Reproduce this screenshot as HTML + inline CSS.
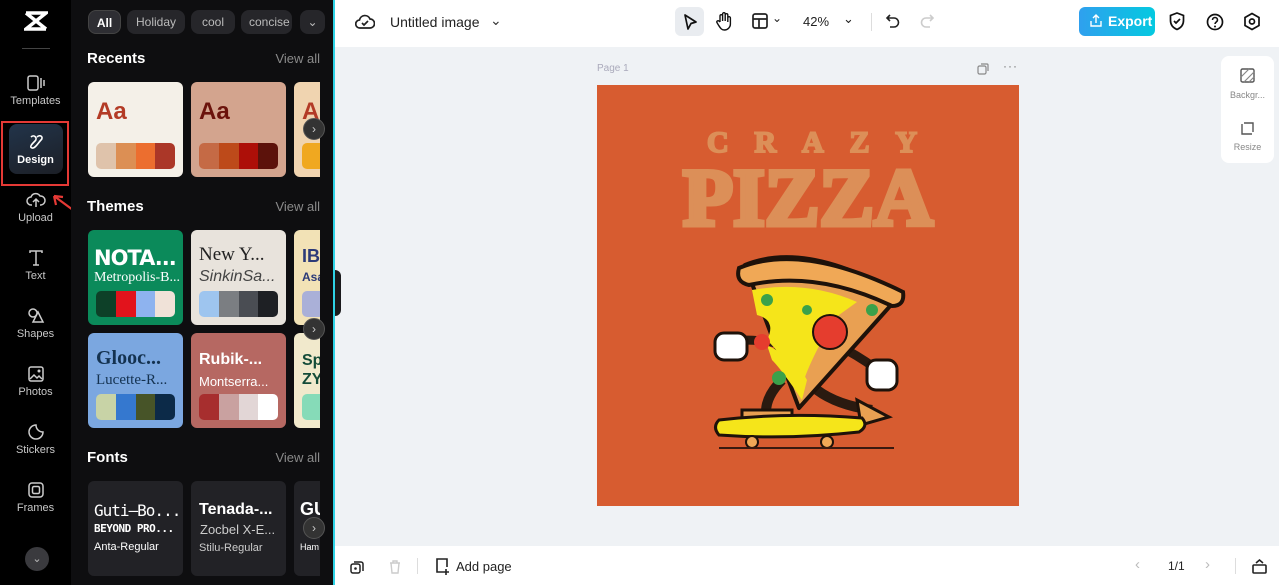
<!DOCTYPE html>
<html><head><meta charset="utf-8"><style>
*{box-sizing:border-box;margin:0;padding:0}
body{width:1279px;height:585px;overflow:hidden;font-family:"Liberation Sans",sans-serif;background:#eff2f5;position:relative}
.abs{position:absolute}
#rail{left:0;top:0;width:71px;height:585px;background:#000}
#panel{left:71px;top:0;width:262px;height:585px;background:#0e0e10;overflow:hidden}
#clip{position:absolute;left:0;top:0;width:249px;height:585px;overflow:hidden}
#edge{left:333px;top:0;width:2px;height:585px;background:#2fd3e6}
.ri{position:absolute;left:0;width:71px;text-align:center;color:#c8c8c8;font-size:11px}
.ri svg{display:block;margin:0 auto 3px}
.chip{position:absolute;top:10px;height:24px;border-radius:8px;background:#26262a;color:#bbb;font-size:12px;line-height:24px;text-align:center;white-space:nowrap}
.h{position:absolute;left:16px;color:#fff;font-weight:bold;font-size:15px}
.va{position:absolute;right:13px;color:#8a8a8a;font-size:13px}
.card{position:absolute;width:95px;height:95px;border-radius:6px;overflow:hidden;white-space:nowrap}
.pal{position:absolute;left:8px;right:8px;bottom:8px;height:26px;border-radius:5px;overflow:hidden;display:flex}
.pal i{flex:1}
.arrow{position:absolute;width:22px;height:22px;border-radius:50%;background:#333;border:1px solid #555;color:#ccc;font-size:12px;line-height:20px;text-align:center}
#top{left:335px;top:0;width:944px;height:47px;background:#fff}
#bot{left:335px;top:546px;width:944px;height:39px;background:#fff}
</style></head><body>
<div id="rail" class="abs">
 <svg class="abs" style="left:24px;top:10px" width="24" height="22" viewBox="0 0 24 22"><path d="M2 3h20L2 19h20M2 3l20 16" stroke="#fff" stroke-width="3.5" fill="none"/></svg>
 <div class="abs" style="left:22px;top:48px;width:28px;height:1px;background:#444"></div>
 <div class="ri" style="top:74px"><svg width="20" height="18" viewBox="0 0 20 18"><rect x="2" y="2" width="10" height="14" rx="2" fill="none" stroke="#ccc" stroke-width="1.5"/><path d="M15 4v10M18 6v6" stroke="#ccc" stroke-width="1.5"/></svg>Templates</div>
 <div class="abs" style="left:1px;top:121px;width:68px;height:65px;border:2px solid #e53935"></div>
 <div class="abs" style="left:9px;top:124px;width:54px;height:50px;border-radius:8px;background:linear-gradient(160deg,#22344a,#1c1f26)"></div>
 <div class="ri" style="top:133px;color:#fff;font-weight:bold"><svg width="18" height="18" viewBox="0 0 18 18"><path d="M4 4c3-3 7 1 4 4S2 14 5 15s6-5 9-8-1-6-4-3" stroke="#fff" stroke-width="1.6" fill="none"/></svg>Design</div>
 <svg class="abs" style="left:48px;top:192px" width="46" height="34"><path d="M44 32L6 4M6 4l2 9M6 4l9 1" stroke="#e53935" stroke-width="2.2" fill="none"/></svg>
 <div class="ri" style="top:191px"><svg width="20" height="18" viewBox="0 0 20 18"><path d="M6 14H5a4 4 0 010-8 5 5 0 019-1 4 4 0 011 9h-1M10 16V9M7 11l3-3 3 3" stroke="#ccc" stroke-width="1.5" fill="none"/></svg>Upload</div>
 <div class="ri" style="top:249px"><svg width="18" height="18" viewBox="0 0 18 18"><path d="M3 4V2h12v2M9 2v14M6 16h6" stroke="#ccc" stroke-width="1.5" fill="none"/></svg>Text</div>
 <div class="ri" style="top:307px"><svg width="20" height="18" viewBox="0 0 20 18"><circle cx="7" cy="6" r="4" fill="none" stroke="#ccc" stroke-width="1.5"/><path d="M12 5l5 10H7z" fill="none" stroke="#ccc" stroke-width="1.5"/></svg>Shapes</div>
 <div class="ri" style="top:365px"><svg width="18" height="18" viewBox="0 0 18 18"><rect x="2" y="2" width="14" height="14" rx="2" fill="none" stroke="#ccc" stroke-width="1.5"/><path d="M3 14l4-4 3 3 2-2 3 3" stroke="#ccc" stroke-width="1.5" fill="none"/><circle cx="12" cy="6" r="1.5" fill="#ccc"/></svg>Photos</div>
 <div class="ri" style="top:423px"><svg width="18" height="18" viewBox="0 0 18 18"><path d="M16 9a7 7 0 11-7-7c0 4 3 7 7 7z" fill="none" stroke="#ccc" stroke-width="1.5"/></svg>Stickers</div>
 <div class="ri" style="top:481px"><svg width="18" height="18" viewBox="0 0 18 18"><rect x="2" y="2" width="14" height="14" rx="3" fill="none" stroke="#ccc" stroke-width="1.5"/><rect x="5.5" y="5.5" width="7" height="7" rx="1.5" fill="none" stroke="#ccc" stroke-width="1.5"/></svg>Frames</div>
 <div class="abs" style="left:25px;top:547px;width:24px;height:24px;border-radius:50%;background:#3a3a3e;color:#bbb;text-align:center;font-size:11px;line-height:24px">⌄</div>
</div>
<div id="panel" class="abs">
 <div class="chip" style="left:17px;width:33px;background:#2e2e33;border:1px solid #444;color:#fff;font-weight:bold">All</div>
 <div class="chip" style="left:56px;width:58px">Holiday</div>
 <div class="chip" style="left:120px;width:44px">cool</div>
 <div class="chip" style="left:170px;width:51px;overflow:hidden;text-align:left;padding-left:8px">concise</div>
 <div class="chip" style="left:229px;width:25px">⌄</div>
 <div class="h" style="top:50px">Recents</div><div class="va" style="top:51px">View all</div>
 <div class="h" style="top:198px">Themes</div><div class="va" style="top:199px">View all</div>
 <div class="h" style="top:449px">Fonts</div><div class="va" style="top:450px">View all</div>
 <div id="clip">
 <div class="card" style="left:17px;top:82px;background:#f4f0e8"><div class="abs" style="left:8px;top:16px;color:#b33b26;font-weight:bold;font-size:24px">Aa</div><div class="pal"><i style="background:#dfc3ab"></i><i style="background:#dc8f54"></i><i style="background:#ec6e2f"></i><i style="background:#ab3728"></i></div></div>
 <div class="card" style="left:120px;top:82px;background:#d3a48e"><div class="abs" style="left:8px;top:16px;color:#6b130c;font-weight:bold;font-size:24px">Aa</div><div class="pal"><i style="background:#c56a45"></i><i style="background:#bd4a1a"></i><i style="background:#ad0f08"></i><i style="background:#5c120b"></i></div></div>
 <div class="card" style="left:223px;top:82px;background:#f0d4b0"><div class="abs" style="left:8px;top:16px;color:#b33b26;font-weight:bold;font-size:24px">A</div><div class="pal"><i style="background:#f0a820"></i></div></div>
 <div class="card" style="left:17px;top:230px;background:#0b8a5a"><div class="abs" style="left:6px;top:16px;color:#fff;font-weight:900;font-size:21px;font-family:'DejaVu Sans';letter-spacing:-1px">NOTA...</div><div class="abs" style="left:6px;top:40px;color:#fff;font-family:'Liberation Serif';font-size:14px">Metropolis-B...</div><div class="pal"><i style="background:#0d4028"></i><i style="background:#e2131c"></i><i style="background:#8eb3ef"></i><i style="background:#f0e2d8"></i></div></div>
 <div class="card" style="left:120px;top:230px;background:#e8e3dc"><div class="abs" style="left:8px;top:14px;color:#222;font-family:'Liberation Serif';font-size:19px">New Y...</div><div class="abs" style="left:8px;top:38px;color:#444;font-style:italic;font-size:16px">SinkinSa...</div><div class="pal"><i style="background:#9ec5ef"></i><i style="background:#7b7e82"></i><i style="background:#4a4d53"></i><i style="background:#1e2024"></i></div></div>
 <div class="card" style="left:223px;top:230px;background:#f2e2b6"><div class="abs" style="left:8px;top:16px;color:#2c3a78;font-weight:bold;font-size:18px">IB</div><div class="abs" style="left:8px;top:40px;color:#2c3a78;font-weight:bold;font-size:12px">Asa</div><div class="pal"><i style="background:#aab0d8"></i></div></div>
 <div class="card" style="left:17px;top:333px;background:#7ba7e0"><div class="abs" style="left:8px;top:14px;color:#143250;font-family:'Liberation Serif';font-weight:bold;font-size:20px">Glooc...</div><div class="abs" style="left:8px;top:39px;color:#143250;font-family:'Liberation Serif';font-size:15px">Lucette-R...</div><div class="pal"><i style="background:#c8d3a6"></i><i style="background:#3578cf"></i><i style="background:#475428"></i><i style="background:#0c2a48"></i></div></div>
 <div class="card" style="left:120px;top:333px;background:#b66862"><div class="abs" style="left:8px;top:18px;color:#fff;font-weight:bold;font-size:16px">Rubik-...</div><div class="abs" style="left:8px;top:41px;color:#fff;font-size:13px">Montserra...</div><div class="pal"><i style="background:#a72e2e"></i><i style="background:#c9a1a0"></i><i style="background:#e2d6d6"></i><i style="background:#fff"></i></div></div>
 <div class="card" style="left:223px;top:333px;background:#f1e9cc"><div class="abs" style="left:8px;top:18px;color:#134b38;font-weight:bold;font-size:16px;line-height:19px">Sp<br>ZY</div><div class="pal"><i style="background:#86dbb8"></i></div></div>
 <div class="card" style="left:17px;top:481px;background:#222226;color:#fff"><div class="abs" style="left:6px;top:20px;font-size:16px;font-family:'DejaVu Sans Mono';letter-spacing:-1px">Guti–Bo...</div><div class="abs" style="left:6px;top:41px;font-size:11px;font-family:'DejaVu Sans Mono';font-weight:bold;letter-spacing:-0.5px">BEYOND PRO...</div><div class="abs" style="left:6px;top:60px;font-size:11px">Anta-Regular</div></div>
 <div class="card" style="left:120px;top:481px;background:#222226;color:#fff"><div class="abs" style="left:8px;top:20px;font-size:16px;font-weight:bold">Tenada-...</div><div class="abs" style="left:9px;top:41px;font-size:13px;color:#ccc">Zocbel X-E...</div><div class="abs" style="left:8px;top:61px;font-size:11px;color:#ccc">Stilu-Regular</div></div>
 <div class="card" style="left:223px;top:481px;background:#222226;color:#fff"><div class="abs" style="left:6px;top:18px;font-size:18px;font-weight:bold">GU</div><div class="abs" style="left:6px;top:61px;font-size:9px">Ham</div></div>
 </div>
 <div class="arrow" style="left:232px;top:118px">›</div>
 <div class="arrow" style="left:232px;top:318px">›</div>
 <div class="arrow" style="left:232px;top:517px">›</div>
</div>
<div class="abs" style="left:333px;top:270px;width:8px;height:46px;background:#1a1a1c;border-radius:0 6px 6px 0"></div>
<div id="edge" class="abs"></div>
<div id="top" class="abs">
 <svg class="abs" style="left:20px;top:13px" width="20" height="18" viewBox="0 0 20 18"><path d="M5 15a4 4 0 01-.5-8 5.5 5.5 0 0110.5-1 4.5 4.5 0 010 9z" fill="none" stroke="#222" stroke-width="1.7"/><path d="M7 10l2 2 4-4" fill="none" stroke="#222" stroke-width="1.7"/></svg>
 <div class="abs" style="left:55px;top:14px;font-size:14px;color:#222">Untitled image</div>
 <div class="abs" style="left:155px;top:12px;font-size:14px;color:#333">⌄</div>
 <div class="abs" style="left:340px;top:7px;width:29px;height:29px;border-radius:6px;background:#e9ecf0"></div>
 <svg class="abs" style="left:347px;top:13px" width="16" height="18"><path d="M3 2l11 7-5 1.5L6 16z" fill="none" stroke="#111" stroke-width="1.7" stroke-linejoin="round"/></svg>
 <svg class="abs" style="left:380px;top:11px" width="18" height="20"><path d="M5 11V5a1.3 1.3 0 012.6 0v5V3a1.3 1.3 0 012.6 0v7V4a1.3 1.3 0 012.6 0v7V7a1.3 1.3 0 012.6 0v6a6 6 0 01-6 6c-3 0-4-2-6-5l-1.5-2.5a1.3 1.3 0 012-1.5L5 11" fill="none" stroke="#111" stroke-width="1.4"/></svg>
 <svg class="abs" style="left:417px;top:13px" width="16" height="16"><rect x="1" y="1" width="14" height="14" rx="2" fill="none" stroke="#222" stroke-width="1.7"/><path d="M1 6h14M7 6v9" stroke="#222" stroke-width="1.7"/></svg>
 <div class="abs" style="left:437px;top:11px;font-size:12px;color:#222">⌄</div>
 <div class="abs" style="left:468px;top:14px;font-size:13px;color:#222">42%</div>
 <div class="abs" style="left:508px;top:11px;font-size:13px;color:#222">⌄</div>
 <div class="abs" style="left:536px;top:13px;width:1px;height:18px;background:#ddd"></div>
 <svg class="abs" style="left:550px;top:13px" width="16" height="16"><path d="M5 2L2 5l3 3M2 5h7a4.5 4.5 0 010 9H5" fill="none" stroke="#222" stroke-width="1.6"/></svg>
 <svg class="abs" style="left:584px;top:13px" width="16" height="16"><path d="M11 2l3 3-3 3M14 5H7a4.5 4.5 0 000 9h4" fill="none" stroke="#ccc" stroke-width="1.6"/></svg>
 <div class="abs" style="left:744px;top:7px;width:76px;height:29px;border-radius:6px;background:linear-gradient(90deg,#2fa0ee,#04c9e0);color:#fff;font-weight:bold;font-size:14px;line-height:29px;padding-left:29px">Export</div>
 <svg class="abs" style="left:755px;top:14px" width="12" height="13"><path d="M6 9V1M3 4l3-3 3 3M1 7v5h10V7" fill="none" stroke="#fff" stroke-width="1.4"/></svg>
 <svg class="abs" style="left:834px;top:12px" width="16" height="19"><path d="M8 1l6.5 2.5v5c0 4.5-3 7.5-6.5 9-3.5-1.5-6.5-4.5-6.5-9v-5z" fill="none" stroke="#111" stroke-width="1.7"/><path d="M5 9l2 2 4-4" fill="none" stroke="#111" stroke-width="1.7"/></svg>
 <svg class="abs" style="left:871px;top:13px" width="18" height="18"><circle cx="9" cy="9" r="7.5" fill="none" stroke="#111" stroke-width="1.7"/><path d="M6.5 7a2.5 2.5 0 015 0c0 2-2.5 2-2.5 4" fill="none" stroke="#111" stroke-width="1.6"/><circle cx="9" cy="13.5" r="1" fill="#111"/></svg>
 <svg class="abs" style="left:908px;top:12px" width="18" height="19"><path d="M9 1.5l7 4v8l-7 4-7-4v-8z" fill="none" stroke="#111" stroke-width="1.7"/><circle cx="9" cy="9.5" r="2.5" fill="none" stroke="#111" stroke-width="1.7"/></svg>
</div>
<div class="abs" style="left:597px;top:63px;font-size:10px;color:#aab">Page 1</div>
<svg class="abs" style="left:977px;top:63px" width="12" height="12"><rect x="1" y="3" width="8" height="8" rx="1.5" fill="none" stroke="#888" stroke-width="1.2"/><path d="M4 1h6a1 1 0 011 1v6" fill="none" stroke="#888" stroke-width="1.2"/></svg>
<div class="abs" style="left:1003px;top:59px;font-size:12px;color:#777;letter-spacing:1px">···</div>
<div class="abs" style="left:597px;top:85px;width:422px;height:421px;background:#d75c30;overflow:hidden">
 <svg class="abs" style="left:0;top:0" width="422" height="160" viewBox="0 0 422 160">
  <text x="110" y="67" font-family="Liberation Serif" font-weight="bold" font-size="30" fill="#dc8f58" stroke="#dc8f58" stroke-width="2" textLength="210" lengthAdjust="spacing">CRAZY</text>
  <text x="86" y="140" font-family="Liberation Serif" font-weight="bold" font-size="82" fill="#dc8f58" stroke="#dc8f58" stroke-width="5" textLength="250" lengthAdjust="spacingAndGlyphs">PIZZA</text>
 </svg>
 <svg class="abs" style="left:110px;top:155px" width="220" height="215" viewBox="0 0 220 215">
  <path d="M35 100 Q70 100 90 110" fill="none" stroke="#2a1a10" stroke-width="9"/>
  <path d="M130 105 Q150 115 168 128" fill="none" stroke="#2a1a10" stroke-width="9"/>
  <path d="M75 140 Q55 160 60 180" fill="none" stroke="#2a1a10" stroke-width="10"/>
  <path d="M110 150 Q130 165 165 170" fill="none" stroke="#2a1a10" stroke-width="10"/>
  <path d="M38 25 Q100 0 193 55 L92 168 Z" fill="#e9a052" stroke="#1e120a" stroke-width="4" stroke-linejoin="round"/>
  <path d="M32 28 Q95 2 196 52 Q198 66 185 66 Q110 30 42 45 Q28 42 32 28z" fill="#f0a856" stroke="#1e120a" stroke-width="4"/>
  <path d="M45 50 Q100 40 150 62 L125 80 Q118 95 110 110 Q95 140 95 150 Q80 120 60 100 Q70 80 50 75 Z" fill="#f5e51a"/>
  <path d="M60 105 Q90 120 100 140 L95 160 Q75 130 65 120z" fill="#f5e51a"/>
  <circle cx="123" cy="92" r="17" fill="#e53d2e" stroke="#1e120a" stroke-width="2"/>
  <circle cx="55" cy="102" r="8" fill="#e53d2e"/>
  <circle cx="60" cy="60" r="6" fill="#3aa14a"/><circle cx="100" cy="70" r="5" fill="#3aa14a"/><circle cx="165" cy="70" r="6" fill="#3aa14a"/><circle cx="72" cy="138" r="7" fill="#3aa14a"/>
  <rect x="8" y="93" width="32" height="27" rx="9" fill="#fff" stroke="#1e120a" stroke-width="3"/>
  <rect x="160" y="120" width="30" height="30" rx="9" fill="#fff" stroke="#1e120a" stroke-width="3"/>
  <path d="M150 160 l32 17 -28 8z" fill="#e9a052" stroke="#1e120a" stroke-width="3"/>
  <path d="M35 170 h50 v12 h-50z" fill="#e9a052" stroke="#1e120a" stroke-width="3"/>
  <path d="M12 180 Q80 172 155 178 Q162 186 152 192 Q80 200 12 195 Q5 187 12 180z" fill="#f5e51a" stroke="#1e120a" stroke-width="3"/>
  <circle cx="45" cy="202" r="6" fill="#f0a856" stroke="#1e120a" stroke-width="2"/><circle cx="120" cy="202" r="6" fill="#f0a856" stroke="#1e120a" stroke-width="2"/>
  <path d="M12 208h175" stroke="#3a1a10" stroke-width="2"/>
 </svg>
</div>
<div class="abs" style="left:1221px;top:56px;width:53px;height:107px;border-radius:8px;background:#fff"></div>
<svg class="abs" style="left:1240px;top:68px" width="15" height="15"><rect x="1" y="1" width="13" height="13" rx="1.5" fill="none" stroke="#555" stroke-width="1.4"/><path d="M1 9l8-8M4 14l10-10M9 14l5-5" stroke="#888" stroke-width="1.2"/></svg>
<div class="abs" style="left:1221px;top:90px;width:53px;text-align:center;font-size:9px;color:#888">Backgr...</div>
<svg class="abs" style="left:1240px;top:121px" width="15" height="15"><path d="M2 3v10h10M4 2h9v9" fill="none" stroke="#555" stroke-width="1.4"/></svg>
<div class="abs" style="left:1221px;top:142px;width:53px;text-align:center;font-size:9px;color:#888">Resize</div>
<div id="bot" class="abs">
 <svg class="abs" style="left:15px;top:14px" width="14" height="14"><rect x="1" y="4" width="9" height="9" rx="2" fill="none" stroke="#222" stroke-width="1.5"/><path d="M4 2h7a2 2 0 012 2v7" fill="none" stroke="#222" stroke-width="1.5"/><circle cx="5.5" cy="8.5" r="1.3" fill="#222"/></svg>
 <svg class="abs" style="left:53px;top:13px" width="14" height="15"><path d="M2 4h10M5 4V2h4v2M3 4l1 10h6l1-10" fill="none" stroke="#ccc" stroke-width="1.4"/></svg>
 <div class="abs" style="left:82px;top:12px;width:1px;height:16px;background:#ddd"></div>
 <svg class="abs" style="left:99px;top:11px" width="17" height="18"><path d="M9 15H3V2h10v8M12 12v6M9 15h6" fill="none" stroke="#222" stroke-width="1.6"/></svg>
 <div class="abs" style="left:121px;top:13px;font-size:13px;color:#222">Add page</div>
 <div class="abs" style="left:800px;top:10px;font-size:15px;color:#bbb">‹</div>
 <div class="abs" style="left:833px;top:13px;font-size:12px;color:#222">1/1</div>
 <div class="abs" style="left:870px;top:10px;font-size:15px;color:#bbb">›</div>
 <div class="abs" style="left:900px;top:12px;width:1px;height:16px;background:#ddd"></div>
 <svg class="abs" style="left:917px;top:12px" width="15" height="16"><rect x="1" y="7" width="13" height="8" rx="1" fill="none" stroke="#222" stroke-width="1.6"/><path d="M4 5l3.5-3 3.5 3" fill="none" stroke="#222" stroke-width="1.6"/></svg>
</div>
</body></html>
